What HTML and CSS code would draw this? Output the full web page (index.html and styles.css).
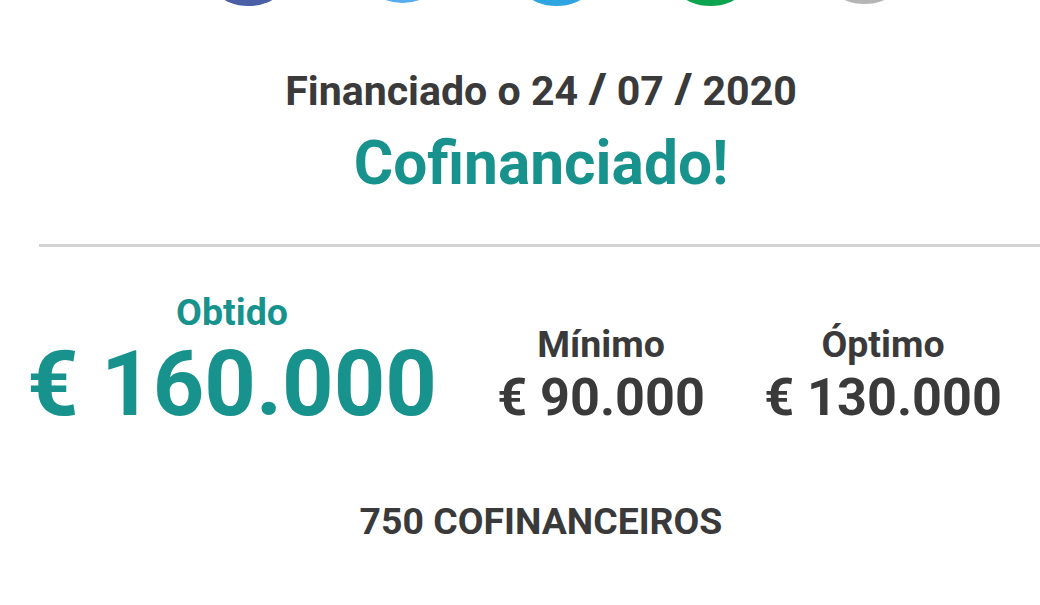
FILE: index.html
```
<!DOCTYPE html>
<html lang="gl">
<head>
    <meta charset="UTF-8">
    <meta name="viewport" content="width=device-width, initial-scale=1.0">
    <title>Cofinanciado</title>
    <link rel="stylesheet" href="styles.css">
</head>
<body>
    <div class="share">
        <span class="dot facebook"></span>
        <span class="dot twitter"></span>
        <span class="dot telegram"></span>
        <span class="dot whatsapp"></span>
        <span class="dot link"></span>
    </div>
    <div class="status">
        <p class="date">Financiado o 24 <span class="slash">/</span> 07 <span class="slash">/</span> 2020</p>
        <h1>Cofinanciado!</h1>
    </div>
    <div class="amounts">
        <div class="amount obtained">
            <span class="label">Obtido</span>
            <strong>€ 160.000</strong>
        </div>
        <div class="amount minimum">
            <span class="label">Mínimo</span>
            <strong>€ 90.000</strong>
        </div>
        <div class="amount optimum">
            <span class="label">Óptimo</span>
            <strong>€ 130.000</strong>
        </div>
    </div>
    <p class="backers">750 COFINANCEIROS</p>
</body>
</html>
```

FILE: styles.css
```
* {
    box-sizing: border-box;
}
body {
    margin: 0;
    height: 605px;
    overflow: hidden;
    font-family: Roboto, Arial, sans-serif;
    font-weight: bold;
    color: #3a3a3b;
    background: #fff;
}
p, h1 {
    margin: 0;
}
/* share buttons */
.share {
    display: flex;
    align-items: flex-end;
    height: 6px;
    padding-left: 198px;
    gap: 53px;
}
.dot {
    flex: none;
    width: 101px;
    height: 101px;
    border-radius: 50%;
}
.facebook { background: #4a5fa5; }
.twitter { background: #55acee; margin-bottom: 3px; }
.telegram { background: #2ca5e0; }
.whatsapp { background: #0da44f; }
.link { background: #b5b5b5; margin-bottom: 2px; }
/* campaign status */
.status {
    height: 241px;
    margin-left: 39px;
    padding: 60px 0 0 3px;
    border-bottom: 3px solid #d3d3d3;
    text-align: center;
    white-space: nowrap;
}
.date {
    font-size: 41.1px;
    line-height: 48px;
}
.slash {
    font-family: "Open Sans", Roboto, sans-serif;
    font-weight: 700;
    font-size: 44px;
    line-height: 1;
}
h1 {
    font-size: 60.4px;
    line-height: 70px;
    margin-top: 14px;
    color: #17928d;
}
/* amounts */
.amounts {
    display: flex;
    align-items: flex-end;
    height: 190px;
    padding-left: 28px;
}
.amount {
    display: flex;
    flex-direction: column;
    align-items: center;
    white-space: nowrap;
}
.label {
    font-size: 37.5px;
    line-height: 44px;
}
.amount strong {
    font-size: 52.2px;
    font-weight: 700;
    line-height: 62px;
}
.obtained {
    width: 408px;
    padding-bottom: 3px;
    color: #17928d;
}
.obtained .label {
    margin-bottom: 2px;
}
.obtained strong {
    font-size: 90px;
    line-height: 98px;
}
.minimum {
    width: 206px;
    margin-left: 62px;
    padding-bottom: 8px;
}
.minimum .label,
.optimum .label {
    margin-bottom: 1px;
}
.optimum {
    width: 236px;
    margin-left: 61px;
    padding-bottom: 8px;
}
/* backers */
.backers {
    padding: 62px 0 0 42px;
    font-size: 37.4px;
    line-height: 44px;
    text-align: center;
}
```
